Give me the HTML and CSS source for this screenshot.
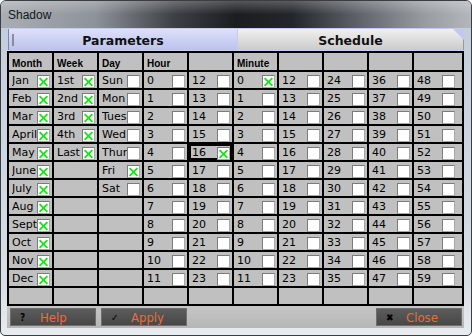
FILE: index.html
```html
<!DOCTYPE html>
<html lang="en">
<head>
    <meta charset="UTF-8">
    <title>Shadow</title>
    <link rel="stylesheet" href="styles.css">
</head>
<body>

<div class="window">
    <div class="titlebar">Shadow</div>

    <div class="client">
        <div class="tabs">
            <div class="tab tab-params"><span class="grip"></span>Parameters</div>
            <div class="tab tab-sched">Schedule</div>
        </div>

        <div class="grid">
            <!-- header -->
            <div class="h">Month</div><div class="h">Week</div><div class="h">Day</div><div class="h">Hour</div><div class="h"></div>
            <div class="h">Minute</div><div class="h"></div><div class="h"></div><div class="h"></div><div class="h"></div>

            <!-- row 0 -->
            <div class="c"><span>Jan</span><i class="cb on"></i></div><div class="c"><span>1st</span><i class="cb on"></i></div><div class="c"><span>Sun</span><i class="cb"></i></div>
            <div class="c"><span>0</span><i class="cb"></i></div><div class="c"><span>12</span><i class="cb"></i></div>
            <div class="c"><span>0</span><i class="cb on"></i></div><div class="c"><span>12</span><i class="cb"></i></div><div class="c"><span>24</span><i class="cb"></i></div><div class="c"><span>36</span><i class="cb"></i></div><div class="c"><span>48</span><i class="cb"></i></div>
            <!-- row 1 -->
            <div class="c"><span>Feb</span><i class="cb on"></i></div><div class="c"><span>2nd</span><i class="cb on"></i></div><div class="c"><span>Mon</span><i class="cb"></i></div>
            <div class="c"><span>1</span><i class="cb"></i></div><div class="c"><span>13</span><i class="cb"></i></div>
            <div class="c"><span>1</span><i class="cb"></i></div><div class="c"><span>13</span><i class="cb"></i></div><div class="c"><span>25</span><i class="cb"></i></div><div class="c"><span>37</span><i class="cb"></i></div><div class="c"><span>49</span><i class="cb"></i></div>
            <!-- row 2 -->
            <div class="c"><span>Mar</span><i class="cb on"></i></div><div class="c"><span>3rd</span><i class="cb on"></i></div><div class="c"><span>Tues</span><i class="cb"></i></div>
            <div class="c"><span>2</span><i class="cb"></i></div><div class="c"><span>14</span><i class="cb"></i></div>
            <div class="c"><span>2</span><i class="cb"></i></div><div class="c"><span>14</span><i class="cb"></i></div><div class="c"><span>26</span><i class="cb"></i></div><div class="c"><span>38</span><i class="cb"></i></div><div class="c"><span>50</span><i class="cb"></i></div>
            <!-- row 3 -->
            <div class="c"><span>April</span><i class="cb on"></i></div><div class="c"><span>4th</span><i class="cb on"></i></div><div class="c"><span>Wed</span><i class="cb"></i></div>
            <div class="c"><span>3</span><i class="cb"></i></div><div class="c"><span>15</span><i class="cb"></i></div>
            <div class="c"><span>3</span><i class="cb"></i></div><div class="c"><span>15</span><i class="cb"></i></div><div class="c"><span>27</span><i class="cb"></i></div><div class="c"><span>39</span><i class="cb"></i></div><div class="c"><span>51</span><i class="cb"></i></div>
            <!-- row 4 -->
            <div class="c"><span>May</span><i class="cb on"></i></div><div class="c"><span>Last</span><i class="cb on"></i></div><div class="c"><span>Thur</span><i class="cb"></i></div>
            <div class="c"><span>4</span><i class="cb"></i></div><div class="c focus"><span>16</span><i class="cb on"></i></div>
            <div class="c"><span>4</span><i class="cb"></i></div><div class="c"><span>16</span><i class="cb"></i></div><div class="c"><span>28</span><i class="cb"></i></div><div class="c"><span>40</span><i class="cb"></i></div><div class="c"><span>52</span><i class="cb"></i></div>
            <!-- row 5 -->
            <div class="c"><span>June</span><i class="cb on"></i></div><div class="c"></div><div class="c"><span>Fri</span><i class="cb on"></i></div>
            <div class="c"><span>5</span><i class="cb"></i></div><div class="c"><span>17</span><i class="cb"></i></div>
            <div class="c"><span>5</span><i class="cb"></i></div><div class="c"><span>17</span><i class="cb"></i></div><div class="c"><span>29</span><i class="cb"></i></div><div class="c"><span>41</span><i class="cb"></i></div><div class="c"><span>53</span><i class="cb"></i></div>
            <!-- row 6 -->
            <div class="c"><span>July</span><i class="cb on"></i></div><div class="c"></div><div class="c"><span>Sat</span><i class="cb"></i></div>
            <div class="c"><span>6</span><i class="cb"></i></div><div class="c"><span>18</span><i class="cb"></i></div>
            <div class="c"><span>6</span><i class="cb"></i></div><div class="c"><span>18</span><i class="cb"></i></div><div class="c"><span>30</span><i class="cb"></i></div><div class="c"><span>42</span><i class="cb"></i></div><div class="c"><span>54</span><i class="cb"></i></div>
            <!-- row 7 -->
            <div class="c"><span>Aug</span><i class="cb on"></i></div><div class="c"></div><div class="c"></div>
            <div class="c"><span>7</span><i class="cb"></i></div><div class="c"><span>19</span><i class="cb"></i></div>
            <div class="c"><span>7</span><i class="cb"></i></div><div class="c"><span>19</span><i class="cb"></i></div><div class="c"><span>31</span><i class="cb"></i></div><div class="c"><span>43</span><i class="cb"></i></div><div class="c"><span>55</span><i class="cb"></i></div>
            <!-- row 8 -->
            <div class="c"><span>Sept</span><i class="cb on"></i></div><div class="c"></div><div class="c"></div>
            <div class="c"><span>8</span><i class="cb"></i></div><div class="c"><span>20</span><i class="cb"></i></div>
            <div class="c"><span>8</span><i class="cb"></i></div><div class="c"><span>20</span><i class="cb"></i></div><div class="c"><span>32</span><i class="cb"></i></div><div class="c"><span>44</span><i class="cb"></i></div><div class="c"><span>56</span><i class="cb"></i></div>
            <!-- row 9 -->
            <div class="c"><span>Oct</span><i class="cb on"></i></div><div class="c"></div><div class="c"></div>
            <div class="c"><span>9</span><i class="cb"></i></div><div class="c"><span>21</span><i class="cb"></i></div>
            <div class="c"><span>9</span><i class="cb"></i></div><div class="c"><span>21</span><i class="cb"></i></div><div class="c"><span>33</span><i class="cb"></i></div><div class="c"><span>45</span><i class="cb"></i></div><div class="c"><span>57</span><i class="cb"></i></div>
            <!-- row 10 -->
            <div class="c"><span>Nov</span><i class="cb on"></i></div><div class="c"></div><div class="c"></div>
            <div class="c"><span>10</span><i class="cb"></i></div><div class="c"><span>22</span><i class="cb"></i></div>
            <div class="c"><span>10</span><i class="cb"></i></div><div class="c"><span>22</span><i class="cb"></i></div><div class="c"><span>34</span><i class="cb"></i></div><div class="c"><span>46</span><i class="cb"></i></div><div class="c"><span>58</span><i class="cb"></i></div>
            <!-- row 11 -->
            <div class="c"><span>Dec</span><i class="cb on"></i></div><div class="c"></div><div class="c"></div>
            <div class="c"><span>11</span><i class="cb"></i></div><div class="c"><span>23</span><i class="cb"></i></div>
            <div class="c"><span>11</span><i class="cb"></i></div><div class="c"><span>23</span><i class="cb"></i></div><div class="c"><span>35</span><i class="cb"></i></div><div class="c"><span>47</span><i class="cb"></i></div><div class="c"><span>59</span><i class="cb"></i></div>
            <!-- row 12 (empty) -->
            <div class="c"></div><div class="c"></div><div class="c"></div><div class="c"></div><div class="c"></div>
            <div class="c"></div><div class="c"></div><div class="c"></div><div class="c"></div><div class="c"></div>
        </div>

        <div class="actions">
            <button class="btn"><span class="ico">?</span>Help</button>
            <button class="btn"><span class="ico">&#10003;</span>Apply</button>
            <button class="btn btn-close"><span class="ico">&#10006;</span>Close</button>
        </div>
    </div>
</div>

</body>
</html>
```

FILE: styles.css
```css
body {
    margin: 0;
    background: #fff;
}
.window {
    width: 472px;
    height: 336px;
    box-sizing: border-box;
    border: 1px solid #3a3e44;
    border-radius: 6px 6px 5px 5px;
    background: linear-gradient(180deg, #c2ccda, #d8dee6 85%, #e8ecf0);
    display: flex;
    flex-direction: column;
    overflow: hidden;
}
.titlebar {
    height: 27px;
    line-height: 28px;
    padding-left: 7px;
    font-family: "Liberation Sans", sans-serif;
    font-size: 12px;
    color: #14161a;
    background:
        linear-gradient(180deg, rgba(255,255,255,0.25), rgba(255,255,255,0) 50%),
        linear-gradient(90deg, #a9aeb4 0%, #8e9399 20%, #3c3f44 37%, #1b1d21 50%, #23262a 62%, #5f6369 76%, #989ca1 90%, #b3b7bb 100%);
}
.client {
    height: 300px;
    margin: 0 7px 7px 6px;
    background: #c6ccee;
    display: flex;
    flex-direction: column;
}

/* tabs */
.tabs {
    display: flex;
    gap: 1px;
    height: 21px;
    margin-top: 1px;
    padding-left: 1px;
}
.tab {
    position: relative;
    box-sizing: border-box;
    display: flex;
    align-items: center;
    justify-content: center;
    padding-top: 1px;
    font-family: "DejaVu Sans", sans-serif;
    font-weight: bold;
    font-size: 12.5px;
    color: #111;
}
.tab-params {
    width: 229px;
    border-left: 1px solid #7e86a8;
    background: linear-gradient(180deg, #dde1fb, #bcc2ec);
}
.grip {
    position: absolute;
    left: 3px;
    top: 5px;
    width: 2px;
    height: 12px;
    background: #8c8c94;
}
.tab-sched {
    flex: 1;
    background: linear-gradient(180deg, #f0f0f0, #cbcbcb);
    border-right: 1px solid #9a9a9a;
}
.tab-sched::after {
    content: "";
    position: absolute;
    top: 0;
    right: -1px;
    border-style: solid;
    border-width: 0 11px 11px 0;
    border-color: transparent #c2c8ee transparent transparent;
}

/* schedule grid */
.grid {
    margin-top: 1px;
    display: grid;
    grid-template-columns: repeat(9, 43px) 48px;
    grid-template-rows: 17px repeat(13, 16px);
    gap: 2px;
    border: 2px solid #000;
    background: #000;
}
.h {
    display: flex;
    align-items: flex-end;
    padding-left: 3px;
    background: #c0c0c0;
    font-family: "Liberation Sans", sans-serif;
    font-weight: bold;
    font-size: 10px;
    line-height: 12px;
    color: #000;
}
.c {
    box-sizing: border-box;
    display: grid;
    grid-template-columns: 25px 13px;
    align-items: end;
    padding-left: 3px;
    background: #c0c0c0;
    font-family: "DejaVu Sans", sans-serif;
    font-size: 11px;
    color: #000;
}
.c span {
    overflow: hidden;
    white-space: nowrap;
    line-height: 15px;
}
.c.focus {
    outline: 2px solid #000;
    outline-offset: -2px;
}
.cb {
    position: relative;
    width: 13px;
    height: 13px;
    box-sizing: border-box;
    background: #fff;
    border: 1px solid #7c7c7c;
    border-right-color: #a8a8a8;
    border-bottom-color: #a8a8a8;
}
.cb.on::before,
.cb.on::after {
    content: "";
    position: absolute;
    left: 50%;
    top: 50%;
    width: 11px;
    height: 2px;
    margin: -1px 0 0 -5.5px;
    background: #1ee21e;
    transform: rotate(45deg);
}
.cb.on::after {
    transform: rotate(-45deg);
}

/* bottom buttons */
.actions {
    flex: 1;
    display: flex;
    align-items: center;
    gap: 5px;
    padding: 0 2px 0 3px;
    background: linear-gradient(180deg, #c6c6c6, #b6b6b6);
}
.btn {
    width: 86px;
    height: 18px;
    box-sizing: border-box;
    display: flex;
    align-items: center;
    padding: 0 0 0 9px;
    border: 1px solid #6e6e6e;
    background: linear-gradient(180deg, #5c5c5c, #474747);
    color: #f0683c;
    font-family: "DejaVu Sans Condensed", "DejaVu Sans", sans-serif;
    font-stretch: condensed;
    font-size: 13px;
    cursor: pointer;
}
.ico {
    width: 20px;
    color: #000;
    font-size: 10px;
    font-weight: bold;
    text-align: left;
}
.btn-close {
    margin-left: auto;
}
```
